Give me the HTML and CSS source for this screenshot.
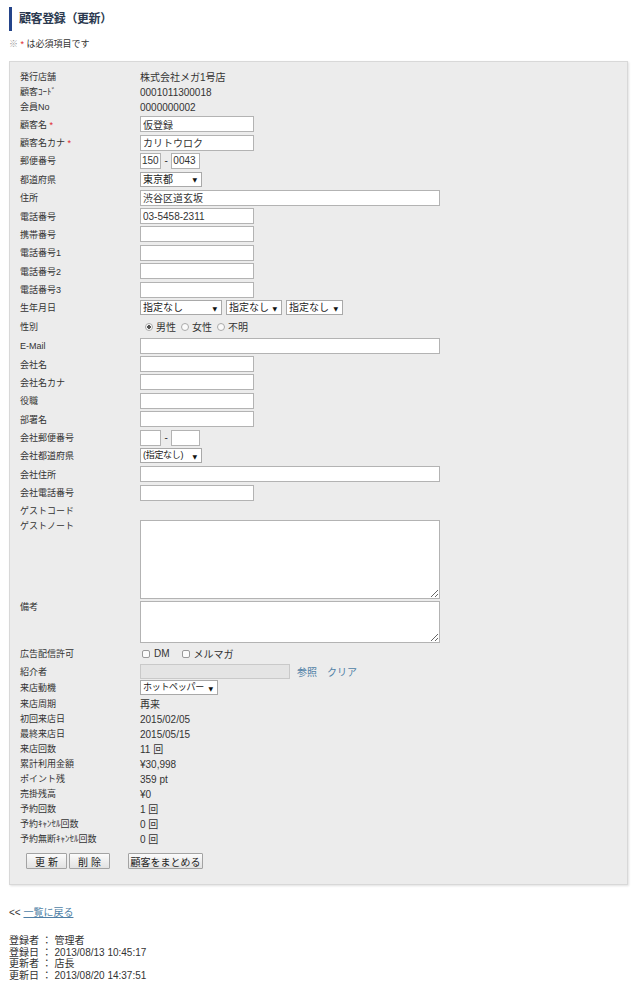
FILE: index.html
```html
<!DOCTYPE html>
<html lang="ja">
<head>
<meta charset="utf-8">
<title>顧客登録（更新）</title>
<link rel="stylesheet" href="styles.css">
</head>
<body>
<h1 class="title">顧客登録（更新）</h1>
<p class="note"><span class="kome">※</span> <span class="req">*</span> は必須項目です</p>

<div class="panel">
  <div class="row t"><div class="lbl">発行店舗</div><div class="val">株式会社メガ1号店</div></div>
  <div class="row t"><div class="lbl">顧客ｺｰﾄﾞ</div><div class="val">0001011300018</div></div>
  <div class="row t"><div class="lbl">会員No</div><div class="val">0000000002</div></div>

  <div class="row i"><div class="lbl">顧客名 <span class="req">*</span></div><div class="val"><input class="in w-m" type="text" value="仮登録"></div></div>
  <div class="row i"><div class="lbl">顧客名カナ <span class="req">*</span></div><div class="val"><input class="in w-m" type="text" value="カリトウロク"></div></div>
  <div class="row i"><div class="lbl">郵便番号</div><div class="val"><input class="in w-z1" type="text" value="150"><span class="dash">-</span><input class="in w-z2" type="text" value="0043"></div></div>
  <div class="row i"><div class="lbl">都道府県</div><div class="val"><span class="sel"><select class="s w-pref"><option>東京都</option></select></span></div></div>
  <div class="row i"><div class="lbl">住所</div><div class="val"><input class="in w-l" type="text" value="渋谷区道玄坂"></div></div>
  <div class="row i"><div class="lbl">電話番号</div><div class="val"><input class="in w-m" type="text" value="03-5458-2311"></div></div>
  <div class="row i"><div class="lbl">携帯番号</div><div class="val"><input class="in w-m" type="text"></div></div>
  <div class="row i"><div class="lbl">電話番号1</div><div class="val"><input class="in w-m" type="text"></div></div>
  <div class="row i"><div class="lbl">電話番号2</div><div class="val"><input class="in w-m" type="text"></div></div>
  <div class="row i"><div class="lbl">電話番号3</div><div class="val"><input class="in w-m" type="text"></div></div>
  <div class="row i"><div class="lbl">生年月日</div><div class="val">
    <span class="sel gap"><select class="s w-y"><option>指定なし</option></select></span><span class="sel gap"><select class="s w-mo"><option>指定なし</option></select></span><span class="sel"><select class="s w-d"><option>指定なし</option></select></span>
  </div></div>
  <div class="row sex"><div class="lbl">性別</div><div class="val">
    <input class="rd first" type="radio" name="sex" checked><span>男性</span><input class="rd" type="radio" name="sex"><span>女性</span><input class="rd" type="radio" name="sex"><span>不明</span>
  </div></div>
  <div class="row i"><div class="lbl">E-Mail</div><div class="val"><input class="in w-l" type="text"></div></div>
  <div class="row i"><div class="lbl">会社名</div><div class="val"><input class="in w-m" type="text"></div></div>
  <div class="row i"><div class="lbl">会社名カナ</div><div class="val"><input class="in w-m" type="text"></div></div>
  <div class="row i"><div class="lbl">役職</div><div class="val"><input class="in w-m" type="text"></div></div>
  <div class="row i"><div class="lbl">部署名</div><div class="val"><input class="in w-m" type="text"></div></div>
  <div class="row i"><div class="lbl">会社郵便番号</div><div class="val"><input class="in w-z1" type="text"><span class="dash">-</span><input class="in w-z2" type="text"></div></div>
  <div class="row i"><div class="lbl">会社都道府県</div><div class="val"><span class="sel"><select class="s w-pref sm"><option>(指定なし)</option></select></span></div></div>
  <div class="row i"><div class="lbl">会社住所</div><div class="val"><input class="in w-l" type="text"></div></div>
  <div class="row i"><div class="lbl">会社電話番号</div><div class="val"><input class="in w-m" type="text"></div></div>

  <div class="row gc"><div class="lbl">ゲストコード</div><div class="val"></div></div>
  <div class="row ta ta1"><div class="lbl">ゲストノート</div><div class="val"><textarea class="tx h1"></textarea></div></div>
  <div class="row ta ta2"><div class="lbl">備考</div><div class="val"><textarea class="tx h2"></textarea></div></div>

  <div class="row ad"><div class="lbl">広告配信許可</div><div class="val">
    <input class="cb first" type="checkbox"><span>DM</span><input class="cb" type="checkbox"><span>メルマガ</span>
  </div></div>
  <div class="row ref"><div class="lbl">紹介者</div><div class="val"><input class="in dis" type="text" disabled><a class="lk first">参照</a><a class="lk">クリア</a></div></div>
  <div class="row sl"><div class="lbl">来店動機</div><div class="val"><span class="sel"><select class="s w-mot sm"><option>ホットペッパー</option></select></span></div></div>

  <div class="row t"><div class="lbl">来店周期</div><div class="val">再来</div></div>
  <div class="row t"><div class="lbl">初回来店日</div><div class="val">2015/02/05</div></div>
  <div class="row t"><div class="lbl">最終来店日</div><div class="val">2015/05/15</div></div>
  <div class="row t"><div class="lbl">来店回数</div><div class="val">11 回</div></div>
  <div class="row t"><div class="lbl">累計利用金額</div><div class="val">¥30,998</div></div>
  <div class="row t"><div class="lbl">ポイント残</div><div class="val">359 pt</div></div>
  <div class="row t"><div class="lbl">売掛残高</div><div class="val">¥0</div></div>
  <div class="row t"><div class="lbl">予約回数</div><div class="val">1 回</div></div>
  <div class="row t"><div class="lbl">予約ｷｬﾝｾﾙ回数</div><div class="val">0 回</div></div>
  <div class="row t"><div class="lbl">予約無断ｷｬﾝｾﾙ回数</div><div class="val">0 回</div></div>

  <div class="btns">
    <button class="btn b-s" type="button">更 新</button><button class="btn b-s" type="button">削 除</button><button class="btn b-l" type="button">顧客をまとめる</button>
  </div>
</div>

<p class="back">&lt;&lt; <a class="backlink">一覧に戻る</a></p>

<div class="meta">
  <div>登録者 ： 管理者</div>
  <div>登録日 ： 2013/08/13 10:45:17</div>
  <div>更新者 ： 店長</div>
  <div>更新日 ： 2013/08/20 14:37:51</div>
</div>
</body>
</html>
```
FILE: styles.css
```css
body {
  margin: 0;
  padding: 7px 12px 20px 9px;
  font-family: "Liberation Sans", "Noto Sans CJK JP", sans-serif;
  font-size: 10px;
  color: #333;
  background: #fff;
}

.title {
  margin: 0;
  height: 24px;
  border-left: 3px solid #24448a;
  padding-left: 7px;
  font-size: 12px;
  font-weight: bold;
  line-height: 24px;
  color: #2c3a50;
  letter-spacing: -0.4px;
}

.note {
  margin: 6.5px 0 0;
  line-height: 13px;
  font-size: 9px;
}
.kome { color: #999; }
.req { color: #e0262c; }

.panel {
  margin-top: 10.5px;
  border: 1px solid #d8d8d8;
  background: #ececec;
  padding: 8px 10px 15px;
  box-shadow: 1px 1px 2px rgba(0, 0, 0, 0.12);
}

.row {
  display: flex;
  align-items: center;
}
.row.t { height: 15px; line-height: 15px; }
.row.i { height: 18.375px; }
.row.sex { height: 19.4px; }
.row.gc { height: 17.6px; }
.row.ta { align-items: flex-start; }
.row.ta1 { padding-top: 0.5px; padding-bottom: 1px; }
.row.ta2 { padding-top: 1px; }
.row.ta .lbl { line-height: 12px; }
.row.ad { height: 20px; margin-top: 1px; }
.row.ref { height: 15px; }
.row.sl { height: 18px; }

.lbl {
  width: 120px;
  flex: none;
  font-size: 9px;
}
.val {
  display: flex;
  align-items: center;
}

.in {
  box-sizing: border-box;
  height: 16px;
  margin: 0;
  padding: 0 2px;
  border: 1px solid #b3b3b3;
  background: #fff;
  font-family: inherit;
  font-size: 10px;
  color: #333;
  outline: none;
}
.w-m { width: 114px; }
.w-l { width: 300px; }
.w-z1 { width: 21px; padding: 0 1px; }
.w-z2 { width: 29px; padding: 0 1px; }
.dash { margin: 0 3.5px; }

.in.dis {
  width: 150px;
  height: 15px;
  background: #e4e4e4;
  border-color: #c9c9c9;
}
.lk {
  color: #4f7fa6;
  margin-left: 10px;
}
.lk.first { margin-left: 7px; }

.sel {
  position: relative;
  display: inline-block;
}
.sel.gap { margin-right: 4px; }
.sel::after {
  content: "\25BC";
  position: absolute;
  right: 5px;
  top: 50%;
  transform: translateY(-50%);
  font-family: "DejaVu Sans", sans-serif;
  font-size: 6px;
  color: #111;
  pointer-events: none;
}
.s {
  -webkit-appearance: none;
  appearance: none;
  display: block;
  box-sizing: border-box;
  height: 15px;
  margin: 0;
  padding: 0 0 0 2px;
  border: 1px solid #a9a9a9;
  border-radius: 0;
  background: #fff;
  font-family: inherit;
  font-size: 10px;
  line-height: 13px;
  color: #222;
}
.s.sm {
  font-size: 9px;
  letter-spacing: -0.3px;
}
.w-pref { width: 62px; }
.w-y { width: 82px; }
.w-mo { width: 56px; }
.w-d { width: 57px; }
.w-mot { width: 78px; }

.rd {
  -webkit-appearance: none;
  appearance: none;
  box-sizing: border-box;
  width: 8px;
  height: 8px;
  margin: 0 3px 0 5px;
  border: 1px solid #aaa;
  border-radius: 50%;
  background: #fafafa;
}
.rd.first { margin-left: 5px; }
.rd:checked {
  background: radial-gradient(circle, #555 0 1.6px, #fafafa 2px);
}

.cb {
  -webkit-appearance: none;
  appearance: none;
  box-sizing: border-box;
  width: 8px;
  height: 8px;
  margin: 0 4px 0 12px;
  border: 1px solid #9a9a9a;
  border-radius: 2px;
  background: #fbfbfb;
}
.cb.first { margin-left: 2px; }

.tx {
  box-sizing: border-box;
  display: block;
  width: 300px;
  margin: 0;
  padding: 2px;
  border: 1px solid #b3b3b3;
  background: #fff;
  font-family: inherit;
  font-size: 10px;
}
.tx.h1 { height: 79px; }
.tx.h2 { height: 42px; }

.btns {
  display: flex;
  margin-top: 6px;
  padding-left: 6px;
}
.btn {
  box-sizing: border-box;
  height: 16px;
  margin: 0 2px 0 0;
  padding: 0;
  border: 1px solid #a3a3a3;
  border-radius: 1px;
  background: linear-gradient(#fbfbfb, #e2e2e2);
  font-family: inherit;
  font-size: 10px;
  color: #222;
}
.b-s { width: 41px; }
.b-l { width: 75px; margin-left: 16px; }

.back {
  margin: 21.5px 0 0;
  line-height: 13px;
}
.backlink {
  color: #4f7fa6;
  text-decoration: underline;
}

.meta {
  margin-top: 15.5px;
  line-height: 11.7px;
}
```
